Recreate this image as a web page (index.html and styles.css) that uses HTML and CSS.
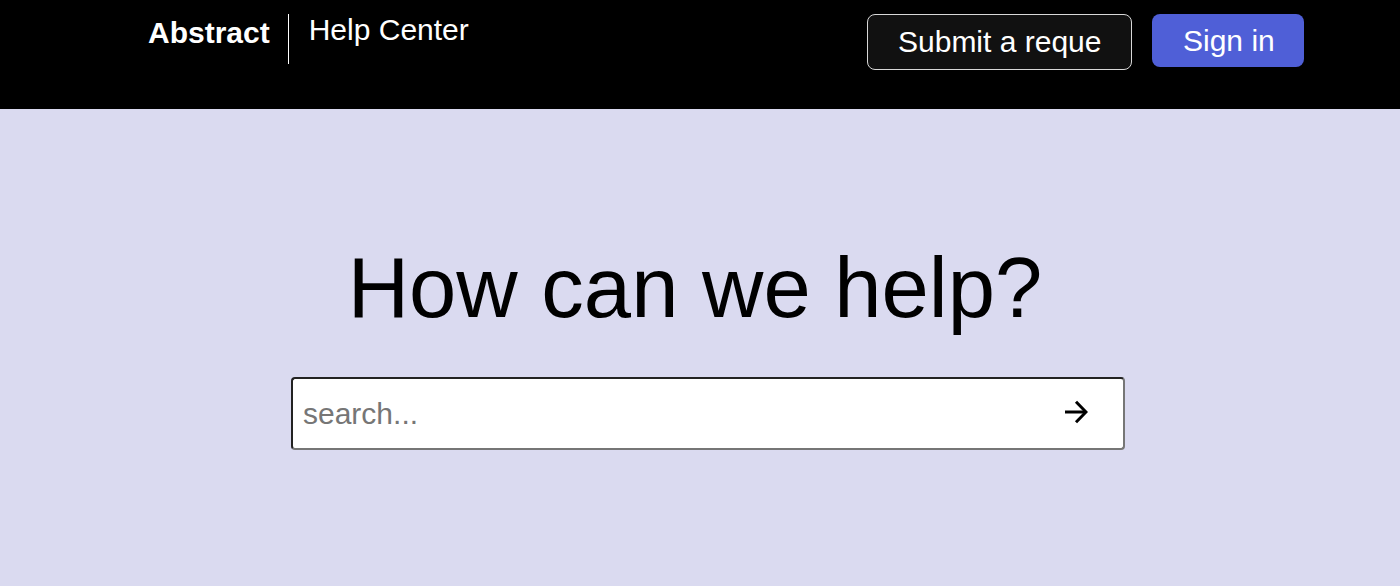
FILE: index.html
```html
<!DOCTYPE html>
<html lang="en">
<head>
<meta charset="utf-8">
<title>Abstract Help Center</title>
<link rel="stylesheet" href="styles.css">
</head>
<body>
<header class="topbar">
  <div class="brand">
    <span class="brand-name">Abstract</span>
    <span class="brand-divider"></span>
    <span class="brand-section">Help Center</span>
  </div>
  <div class="actions">
    <a class="btn btn-outline" href="#">Submit a reque</a>
    <a class="btn btn-primary" href="#">Sign in</a>
  </div>
</header>
<main class="hero">
  <h1 class="hero-title">How can we help?</h1>
  <form class="search">
    <input class="search-input" type="search" placeholder="search...">
    <button class="search-btn" type="button" aria-label="Search">
      <svg width="24" height="24" viewBox="0 0 24 24" fill="none" stroke="#000" stroke-width="3" stroke-linecap="butt" stroke-linejoin="miter"><path d="M1 12H22"/><path d="M12 1.8L22 12L12 22.2"/></svg>
    </button>
  </form>
</main>
</body>
</html>
```

FILE: styles.css
```css
* { box-sizing: border-box; }
html, body { margin: 0; padding: 0; }
body {
  font-family: "Liberation Sans", Arial, sans-serif;
  background: #dadaf0;
  height: 586px;
  overflow: hidden;
}
.topbar {
  background: #000;
  height: 109px;
  display: flex;
  justify-content: space-between;
  align-items: flex-start;
  padding: 14px 96px 0 148px;
}
.brand {
  display: flex;
  align-items: flex-start;
  color: #fff;
}
.brand-name {
  font-weight: bold;
  font-size: 30px;
  line-height: 36px;
  margin-top: 1px;
}
.brand-divider {
  width: 1px;
  height: 50px;
  background: #fff;
  margin: 0 20px 0 18px;
}
.brand-section {
  font-size: 30px;
  line-height: 36px;
  margin-top: -2px;
}
.actions {
  display: flex;
  gap: 20px;
  align-items: flex-start;
}
.btn {
  display: flex;
  align-items: center;
  font-size: 30px;
  color: #fff;
  text-decoration: none;
  border-radius: 8px;
  white-space: nowrap;
}
.btn-outline {
  width: 265px;
  height: 56px;
  padding: 0 30px;
  background: #111;
  border: 1px solid #d8d8d8;
}
.btn-primary {
  width: 152px;
  height: 53px;
  padding: 0 31px;
  background: #4f5fd7;
}
.hero {
  padding-top: 130px;
}
.hero-title {
  margin: 0;
  font-weight: normal;
  font-size: 85px;
  line-height: 98px;
  text-align: center;
  padding-right: 10px;
  color: #000;
}
.search {
  margin: 40px 0 0 291px;
  width: 834px;
  height: 73px;
  display: flex;
  align-items: center;
  background: #fff;
  border: 2px solid;
  border-color: #222 #767676 #767676 #222;
  border-radius: 4px;
}
.search-input {
  flex: 1;
  height: 100%;
  border: none;
  outline: none;
  background: transparent;
  font-family: "Liberation Sans", Arial, sans-serif;
  font-size: 30px;
  padding: 0 0 0 10px;
  color: #000;
}
.search-input::placeholder { color: #767676; }
.search-btn {
  width: 70px;
  height: 100%;
  margin-right: 12px;
  border: none;
  background: transparent;
  display: flex;
  align-items: center;
  justify-content: center;
  padding: 0;
}
.search-btn svg { display: block; margin-top: -4px; }
```
